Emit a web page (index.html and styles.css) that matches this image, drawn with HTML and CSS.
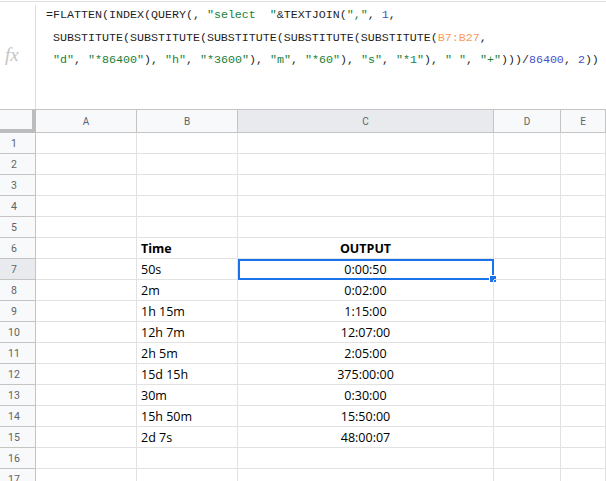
FILE: index.html
```html
<!DOCTYPE html>
<html>
<head>
<meta charset="utf-8">
<link rel="stylesheet" href="styles.css">
</head>
<body>
<div class="formula-bar">
  <div class="fx">fx</div>
  <div class="sep"></div>
  <div class="formula">
    <div class="fline">=FLATTEN(INDEX(QUERY(, <span class="s">"select  "</span>&amp;TEXTJOIN(<span class="s">","</span>, <span class="n">1</span>,</div>
    <div class="fline"> SUBSTITUTE(SUBSTITUTE(SUBSTITUTE(SUBSTITUTE(SUBSTITUTE(<span class="r">B7:B27</span>,</div>
    <div class="fline"> <span class="s">"d"</span>, <span class="s">"*86400"</span>), <span class="s">"h"</span>, <span class="s">"*3600"</span>), <span class="s">"m"</span>, <span class="s">"*60"</span>), <span class="s">"s"</span>, <span class="s">"*1"</span>), <span class="s">" "</span>, <span class="s">"+"</span>)))/<span class="n">86400</span>, <span class="n">2</span>))</div>
  </div>
</div>
<div class="grid" id="grid">
  <div class="corner"></div>
  <div class="ch">A</div>
  <div class="ch">B</div>
  <div class="ch sel">C</div>
  <div class="ch">D</div>
  <div class="ch">E</div>
</div>
<script src="app.js"></script>
</body>
</html>
```
FILE: app.js
```js
const data = {
  6: ["Time", "OUTPUT", true],
  7: ["50s", "0:00:50"],
  8: ["2m", "0:02:00"],
  9: ["1h 15m", "1:15:00"],
  10: ["12h 7m", "12:07:00"],
  11: ["2h 5m", "2:05:00"],
  12: ["15d 15h", "375:00:00"],
  13: ["30m", "0:30:00"],
  14: ["15h 50m", "15:50:00"],
  15: ["2d 7s", "48:00:07"]
};
const grid = document.getElementById("grid");
for (let r = 1; r <= 17; r++) {
  const d = data[r] || ["", "", false];
  const rh = document.createElement("div");
  rh.className = "rh" + (r === 7 ? " sel" : "");
  rh.textContent = r;
  grid.appendChild(rh);
  const cells = ["", d[0], d[1], "", ""];
  cells.forEach((t, i) => {
    const c = document.createElement("div");
    c.className = "cell" + (i === 2 ? " center" : "") + (d[2] ? " bold" : "");
    c.textContent = t;
    if (r === 7 && i === 2) {
      const s = document.createElement("div");
      s.className = "selbox";
      const h = document.createElement("div");
      h.className = "handle";
      s.appendChild(h);
      c.appendChild(s);
    }
    grid.appendChild(c);
  });
}
```
FILE: styles.css
```css
html, body {
  margin: 0;
  padding: 0;
  background: #fff;
  overflow: hidden;
  width: 606px;
  height: 481px;
}
body {
  font-family: "Open Sans", sans-serif;
}
.formula-bar {
  margin-top: 1px;
  border-top: 1px solid #e0e0e0;
  height: 108px;
  display: flex;
  box-sizing: border-box;
}
.fx {
  width: 35px;
  padding-left: 5px;
  box-sizing: border-box;
  display: flex;
  align-items: center;
  font-family: "Liberation Serif", serif;
  font-style: italic;
  font-size: 19px;
  color: #c4c4c4;
  padding-bottom: 2px;
}
.sep {
  width: 1px;
  background: #dadce0;
  margin-top: 3px;
}
.formula {
  padding: 2px 0 0 10px;
  font-family: "Liberation Mono", monospace;
  font-size: 11.67px;
  line-height: 22.5px;
  color: #1f1f1f;
}
.fline {
  white-space: pre;
}
.s { color: #188038; }
.n { color: #4a50c8; }
.r { color: #f79b5a; }
.grid {
  display: grid;
  grid-template-columns: 36px 101px 101px 256px 67px 45px;
  grid-template-rows: 23px;
  grid-auto-rows: 21px;
  border-top: 1px solid #c4c4c4;
}
.corner {
  background: #f8f9fa;
  border-right: 4px solid #bdbdbd;
  border-bottom: 4px solid #bdbdbd;
  box-sizing: border-box;
}
.ch {
  background: #f8f9fa;
  border-right: 1px solid #c4c4c4;
  border-bottom: 1px solid #c4c4c4;
  box-sizing: border-box;
  display: flex;
  align-items: center;
  justify-content: center;
  font-family: Roboto, sans-serif;
  font-size: 10px;
  color: #5f6368;
}
.ch.sel, .rh.sel {
  background: #e8eaed;
}
.rh {
  background: #f8f9fa;
  border-right: 1px solid #c4c4c4;
  border-bottom: 1px solid #c4c4c4;
  box-sizing: border-box;
  display: flex;
  align-items: center;
  justify-content: center;
  padding-right: 7px;
  font-family: Roboto, sans-serif;
  font-size: 10.5px;
  color: #5f6368;
}
.cell {
  position: relative;
  border-right: 1px solid #e2e2e2;
  border-bottom: 1px solid #e2e2e2;
  box-sizing: border-box;
  display: flex;
  align-items: center;
  padding-left: 4px;
  font-size: 12.5px;
  color: #000;
  white-space: nowrap;
}
.cell.center {
  justify-content: center;
  padding-left: 0;
}
.cell.bold {
  font-weight: 700;
}
.selbox {
  position: absolute;
  top: 0;
  left: 0;
  right: -1px;
  bottom: -1px;
  border: 2px solid #1a73e8;
  box-sizing: border-box;
}
.handle {
  position: absolute;
  right: -5px;
  bottom: -5px;
  width: 6px;
  height: 6px;
  background: #1a73e8;
  border: 1px solid #fff;
}
```
